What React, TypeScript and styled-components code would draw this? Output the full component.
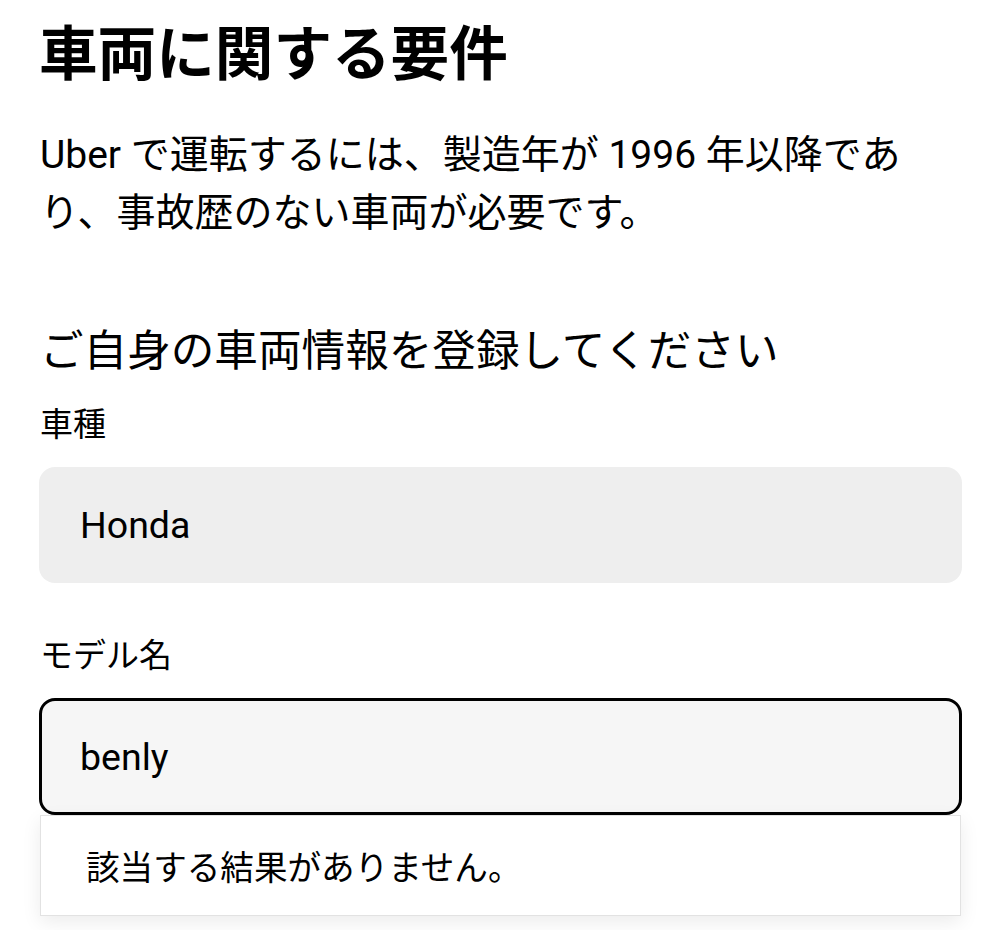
import React from 'react';
import styled, { createGlobalStyle } from 'styled-components';

const GlobalStyle = createGlobalStyle`
    body {
        margin: 0;
        background: #ffffff;
        font-family: Roboto, "Noto Sans CJK JP", sans-serif;
        color: #000000;
    }
`;

const Page = styled.div`
    width: 999px;
    height: 930px;
    padding: 15px 37px 0 39px;
    box-sizing: border-box;
    display: flex;
    flex-direction: column;
    overflow: hidden;
`;

const Title = styled.h1`
    margin: 0;
    font-size: 58.6px;
    line-height: 80px;
    font-weight: 700;
`;

const Lead = styled.p`
    margin: 31px 0 0 1px;
    font-size: 39px;
    line-height: 58px;
    font-weight: 400;
`;

const SectionTitle = styled.h2`
    margin: 80px 0 0 1px;
    font-size: 43.6px;
    line-height: 60px;
    font-weight: 400;
`;

const Label = styled.label<{ $gap: number }>`
    display: block;
    margin: ${(p) => p.$gap}px 0 0 1px;
    font-size: 33px;
    line-height: 44px;
`;

const Field = styled.div<{ $focused?: boolean }>`
    margin-top: 20px;
    height: ${(p) => (p.$focused ? 117 : 116)}px;
    box-sizing: border-box;
    border-radius: 16px;
    display: flex;
    align-items: center;
    padding-left: ${(p) => (p.$focused ? 38 : 41)}px;
    font-size: 37.5px;
    background: ${(p) => (p.$focused ? '#f6f6f6' : '#eeeeee')};
    border: ${(p) => (p.$focused ? '3.5px solid #000000' : 'none')};
`;

const Combo = styled.div`
    position: relative;
`;

const Menu = styled.div`
    height: 101px;
    box-sizing: border-box;
    margin: 0 1px;
    border: 1px solid #e2e2e2;
    background: #ffffff;
    box-shadow: 0 6px 18px rgba(0, 0, 0, 0.08);
    display: flex;
    align-items: center;
    padding-left: 45px;
    font-size: 33.6px;
`;

export default function App() {
    return (
        <>
            <GlobalStyle />
            <Page>
                <Title>車両に関する要件</Title>
                <Lead>
                    Uber で運転するには、製造年が 1996 年以降であ
                    <br />
                    り、事故歴のない車両が必要です。
                </Lead>
                <SectionTitle>ご自身の車両情報を登録してください</SectionTitle>
                <Label $gap={21}>車種</Label>
                <Field>Honda</Field>
                <Label $gap={51}>モデル名</Label>
                <Combo>
                    <Field $focused>benly</Field>
                    <Menu>該当する結果がありません。</Menu>
                </Combo>
            </Page>
        </>
    );
}
